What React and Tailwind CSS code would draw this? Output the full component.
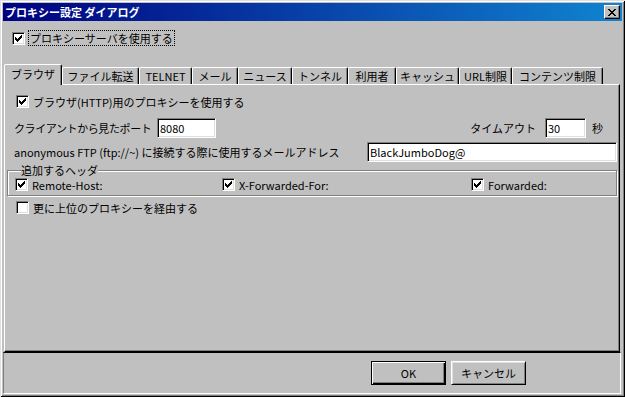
import React from "react";

const Check = ({ checked }) => (
  <span className="w-[13px] h-[13px] shrink-0 bg-white border border-t-[#808080] border-l-[#808080] border-b-white border-r-white shadow-[inset_1px_1px_0_#000,inset_-1px_-1px_0_#dfdfdf] flex items-center justify-center">
    {checked && (
      <svg width="7" height="7" viewBox="0 0 7 7" shapeRendering="crispEdges">
        <rect x="0" y="2" width="1" height="3" fill="#000" />
        <rect x="1" y="3" width="1" height="3" fill="#000" />
        <rect x="2" y="4" width="1" height="3" fill="#000" />
        <rect x="3" y="3" width="1" height="3" fill="#000" />
        <rect x="4" y="2" width="1" height="3" fill="#000" />
        <rect x="5" y="1" width="1" height="3" fill="#000" />
        <rect x="6" y="0" width="1" height="3" fill="#000" />
      </svg>
    )}
  </span>
);

const Field = ({ value, w }) => (
  <div
    className={`${w} h-[20px] shrink-0 bg-white border border-t-[#808080] border-l-[#808080] border-b-white border-r-white shadow-[inset_1px_1px_0_#000,inset_-1px_-1px_0_#dfdfdf] pl-[2px] flex items-center text-[11px] leading-[14px] text-black`}
  >
    {value}
  </div>
);

const tabs = [
  ["ブラウザ", "w-[58px]"],
  ["ファイル転送", "w-[77px]"],
  ["TELNET", "w-[53px]"],
  ["メール", "w-[46px]"],
  ["ニュース", "w-[54px]"],
  ["トンネル", "w-[56px]"],
  ["利用者", "w-[48px]"],
  ["キャッシュ", "w-[63px]"],
  ["URL制限", "w-[53px]"],
  ["コンテンツ制限", "w-[91px]"],
];

export default function App() {
  return (
    <div className="w-[625px] h-[397px] bg-[#c0c0c0] px-[3px] pt-[3px] pb-[3px] flex flex-col font-['Noto_Sans_CJK_JP',sans-serif] text-[11px] leading-[14px] text-black shadow-[inset_1px_1px_0_#dfdfdf,inset_-1px_-1px_0_#000,inset_2px_2px_0_#fff,inset_-2px_-2px_0_#808080] overflow-hidden">
      {/* title bar */}
      <div className="h-[18px] shrink-0 flex items-center pl-[2px] pr-[2px] bg-[linear-gradient(to_right,#000080,#1084d0)]">
        <span className="text-white font-bold text-[11px] leading-[14px]">プロキシー設定 ダイアログ</span>
        <div className="ml-auto w-[16px] h-[14px] bg-[#c0c0c0] border border-t-white border-l-white border-r-black border-b-black shadow-[inset_-1px_-1px_0_#808080] flex items-center justify-center">
          <svg width="8" height="7" viewBox="0 0 8 7" shapeRendering="crispEdges">
            <path d="M0 0h2v1h1v1h2V1h1V0h2v1H7v1H6v1H5v1h1v1h1v1h1v1H6V6H5V5H3v1H2v1H0V6h1V5h1V4h1V3H2V2H1V1H0z" fill="#000" />
          </svg>
        </div>
      </div>

      {/* use proxy checkbox */}
      <div className="mt-[9px] h-[16px] shrink-0 flex items-center pl-[9px]">
        <Check checked />
        <span className="ml-[3px] h-[16px] border border-dotted border-black px-[1px] flex items-center">プロキシーサーバを使用する</span>
      </div>

      {/* tab strip */}
      <div className="mt-[18px] h-[20px] shrink-0 flex items-end pl-[1px]">
        {tabs.map(([label, w], i) =>
          i === 0 ? (
            <div
              key={label}
              className={`${w} h-[21px] mb-[-1px] relative z-10 bg-[#c0c0c0] border-t border-l border-r border-t-white border-l-white border-r-black rounded-t-[2px] shadow-[inset_-1px_0_0_#808080] flex items-center justify-center pb-[2px]`}
            >
              {label}
            </div>
          ) : (
            <div
              key={label}
              className={`${w} h-[17px] shrink-0 bg-[#c0c0c0] border-t border-l border-r border-t-white border-l-white border-r-black rounded-t-[2px] shadow-[inset_-1px_0_0_#808080] flex items-center justify-center`}
            >
              {label}
            </div>
          )
        )}
      </div>

      {/* tab panel */}
      <div className="ml-[1px] w-[616px] h-[268px] shrink-0 border border-t-white border-l-white border-r-black border-b-black shadow-[inset_-1px_-1px_0_#808080] px-[2px] pt-[10px] flex flex-col">
        <div className="h-[13px] flex items-center pl-[9px]">
          <Check checked />
          <span className="ml-[4px]">ブラウザ(HTTP)用のプロキシーを使用する</span>
        </div>

        <div className="mt-[10px] h-[20px] flex items-center pl-[7px]">
          <span className="w-[143px] shrink-0 tracking-[-0.4px]">クライアントから見たポート</span>
          <Field value="8080" w="w-[59px]" />
          <span className="ml-auto">タイムアウト</span>
          <div className="ml-[9px]">
            <Field value="30" w="w-[41px]" />
          </div>
          <span className="ml-[6px] w-[25px]">秒</span>
        </div>

        <div className="mt-[4px] h-[20px] flex items-center pl-[7px]">
          <span>anonymous FTP (ftp://~) に接続する際に使用するメールアドレス</span>
          <div className="ml-auto">
            <Field value="BlackJumboDog@" w="w-[250px]" />
          </div>
        </div>

        <fieldset className="mt-[1px] border border-[#808080] shadow-[1px_1px_0_#fff,inset_1px_1px_0_#fff] pl-[7px] pb-[4px]">
          <legend className="ml-[6px] px-0 bg-[#c0c0c0] h-[14px] leading-[14px]">追加するヘッダ</legend>
          <div className="mt-[1px] h-[13px] flex items-center">
            <div className="w-[207px] flex items-center">
              <Check checked />
              <span className="ml-[4px]">Remote-Host:</span>
            </div>
            <div className="w-[249px] flex items-center">
              <Check checked />
              <span className="ml-[4px]">X-Forwarded-For:</span>
            </div>
            <div className="flex items-center">
              <Check checked />
              <span className="ml-[4px]">Forwarded:</span>
            </div>
          </div>
        </fieldset>

        <div className="mt-[5px] h-[13px] flex items-center pl-[9px]">
          <Check />
          <span className="ml-[4px]">更に上位のプロキシーを経由する</span>
        </div>
      </div>

      {/* bottom panel */}
      <div className="w-[618px] h-[42px] shrink-0 border border-t-black border-l-[#808080] border-b-white border-r-white flex items-center pl-[367px] gap-[5px]">
        <div className="w-[75px] h-[24px] border border-black shadow-[inset_1px_1px_0_#fff,inset_-1px_-1px_0_#000,inset_-2px_-2px_0_#808080] flex items-center justify-center">
          OK
        </div>
        <div className="w-[75px] h-[24px] border border-t-white border-l-white border-r-black border-b-black shadow-[inset_1px_1px_0_#dfdfdf,inset_-1px_-1px_0_#808080] flex items-center justify-center">
          キャンセル
        </div>
      </div>
    </div>
  );
}
